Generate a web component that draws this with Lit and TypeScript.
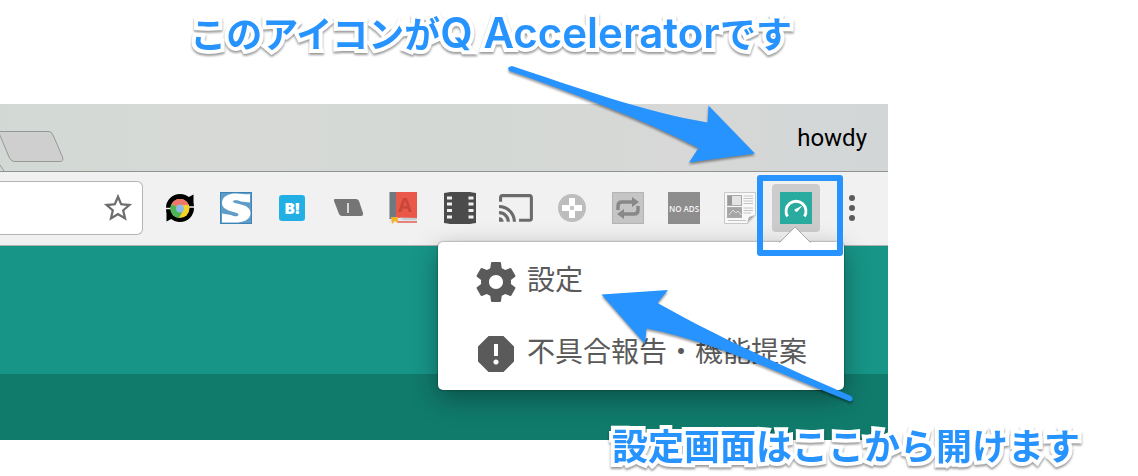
import { LitElement, html, css, svg } from "lit";
import { customElement } from "lit/decorators.js";

const extensions = [
  {
    name: "Reload",
    art: svg`<circle cx="16" cy="16" r="11.5" fill="none" stroke="#000" stroke-width="5"/>
      <path d="M21 7L29.500 2.500V15H20Z" fill="#000"/><path d="M11 25L2.500 29.500V17.500H12Z" fill="#000"/>
      <path d="M1 16.500H7M25 15H31" stroke="#f1f1f1" stroke-width="1.400"/>
      <circle cx="16" cy="16.500" r="9.500" fill="#f7d327"/>
      <path d="M16 16.500L7.500 12A9.500 9.500 0 0 1 24.800 13H16Z" fill="#f0756a"/>
      <path d="M16 16.500L7.500 12A9.500 9.500 0 0 0 15 26L19 18.500Z" fill="#4eb457"/>
      <circle cx="16" cy="16.500" r="4" fill="#8dbbe6"/>`,
  },
  {
    name: "Stylish",
    art: svg`<rect width="32" height="32" fill="#3d84b6"/><rect x="1" y="1" width="30" height="30" fill="#5f9dc8"/>
      <path d="M30 2V10.500L21 9.500C17 7.500 13 8 13 9.500C13 12.500 30.500 11 30.500 21C30.500 28 23 30.500 15 30.500H2V21.500L11 23C15 25 18.500 24.500 18.500 22.500C18.500 19.500 2 20 2 11C2 4 9 1.500 16 1.500C22 1.500 27 3 30 2Z" fill="#fff"/>`,
  },
  {
    name: "Bookmark",
    art: svg`<rect x="3" y="3" width="26" height="26" rx="3" fill="#22b0e4"/>
      <text x="16" y="22" font-size="16" font-weight="800" text-anchor="middle" fill="#fff">B!</text>`,
  },
  {
    name: "Tab",
    art: svg`<path d="M3 7H24Q26 7 27 9L31 21Q31.500 24 29 24H10Q8 24 7 22L2 9Q1.500 7 3 7Z" fill="#757575"/>
      <path d="M16 11V21" stroke="#d8d8d8" stroke-width="2"/>`,
  },
  {
    name: "Dictionary",
    art: svg`<rect x="1" width="28" height="31" fill="#e9eaf2"/><rect x="1.500" width="8" height="27" fill="#6f7a80"/>
      <rect x="8" width="21" height="26" fill="#e95848"/><path d="M9 28.500H29" stroke="#dde6ea" stroke-width="3"/>
      <path d="M9 30H29" stroke="#e95848" stroke-width="1.400"/><path d="M11 25.500L16 28H29V26Z" fill="#c3cdd2"/>
      <path d="M3 25H10V31L7 29L4 32Z" fill="#f0b52c"/>
      <text x="17" y="20" font-size="20" font-weight="700" text-anchor="middle" fill="#c9463a">A</text>`,
  },
  {
    name: "Film",
    art: svg`<path d="M0 1Q4 .5 6 0H26Q28 .5 32 1V31Q28 31.500 26 32H6Q4 31.500 0 31Z" fill="#4b4b4b"/>
      <path d="M3 4.500h5v3H3zM3 10.500h5v3H3zM3 17h5v3H3zM3 23.500h5v3H3zM24.500 4.500h5v3h-5zM24.500 10.500h5v3h-5zM24.500 17h5v3h-5zM24.500 23.500h5v3h-5z" fill="#f1f1f1"/>`,
  },
  {
    name: "Cast",
    art: svg`<path transform="translate(-2.500 -2.500) scale(1.54)" fill="#6b6b6b" d="M21 3H3c-1.100 0-2 .9-2 2v3h2V5h18v14h-7v2h7c1.100 0 2-.9 2-2V5c0-1.100-.9-2-2-2zM1 18v3h3c0-1.660-1.340-3-3-3zm0-4v2c2.760 0 5 2.240 5 5h2c0-3.870-3.130-7-7-7zm0-4v2c4.970 0 9 4.030 9 9h2c0-6.080-4.930-11-11-11z"/>`,
  },
  {
    name: "Game pad",
    art: svg`<circle cx="16" cy="16" r="14" fill="#bdbdbd"/>
      <path d="M13 6h6v7h7v6h-7v7h-6v-7H6v-6h7z" fill="#fff"/><rect x="14" y="14" width="4" height="4" rx="1" fill="#c4c4c4"/>`,
  },
  {
    name: "Repeat",
    art: svg`<rect x=".5" y=".5" width="31" height="31" fill="#c5c5c5" stroke="#b4b4b4"/>
      <path d="M6 18V14Q6 10 10 10H21M26 14V18Q26 22 22 22H11" fill="none" stroke="#888" stroke-width="3.500"/>
      <path d="M20 5L27 10L20 15Z M12 17L5 22L12 27Z" fill="#888"/>`,
  },
  {
    name: "No ads",
    art: svg`<rect width="32" height="32" fill="#8d8d8d"/>
      <text x="16" y="20" font-size="8" font-weight="600" text-anchor="middle" fill="#f4f4f4">NO ADS</text>`,
  },
  {
    name: "News",
    art: svg`<path d="M.5 .5H31.500V23L24 31.500H.5Z" fill="#f8f8f8" stroke="#c9c9c9"/>
      <rect x="3.500" y="3.500" width="14" height="10" fill="#e4e4e4" stroke="#aaa"/><rect x="4" y="4" width="4" height="9" fill="#999"/>
      <rect x="3.500" y="15.500" width="14" height="10" fill="#a5a5a5" stroke="#aaa"/><path d="M5 23L9 18L12 21L14 19L17 23" stroke="#ddd" fill="none"/>
      <path d="M19.500 4H29M19.500 6.500H29M19.500 9H29M19.500 11.500H29M19.500 16H29M19.500 18.500H29M19.500 21H27M4 28.500H22" stroke="#c4c4c4"/>
      <path d="M23 31L25 25L31 23Z" fill="#aaa"/>`,
  },
];

const menuItems = [
  {
    label: "設定",
    path: "M19.430 12.980c.04-.32.07-.64.07-.98s-.03-.66-.07-.98l2.110-1.650c.19-.15.24-.42.12-.64l-2-3.460c-.12-.22-.39-.3-.61-.22l-2.490 1c-.52-.4-1.080-.73-1.690-.98l-.38-2.650C14.460 2.180 14.250 2 14 2h-4c-.25 0-.46.18-.49.42l-.38 2.650c-.61.25-1.170.59-1.690.98l-2.490-1c-.23-.09-.49 0-.61.22l-2 3.460c-.13.22-.07.49.12.64l2.110 1.650c-.04.32-.07.65-.07.98s.03.66.07.98l-2.110 1.650c-.19.15-.24.42-.12.64l2 3.460c.12.22.39.3.61.22l2.490-1c.52.4 1.080.73 1.690.98l.38 2.650c.03.24.24.42.49.42h4c.25 0 .46-.18.49-.42l.38-2.650c.61-.25 1.170-.59 1.690-.98l2.490 1c.23.09.49 0 .61-.22l2-3.460c.12-.22.07-.49-.12-.64l-2.110-1.650zM12 15.500c-1.930 0-3.500-1.570-3.500-3.500s1.570-3.500 3.500-3.500 3.500 1.570 3.500 3.500-1.570 3.500-3.500 3.500z",
  },
  {
    label: "不具合報告・機能提案",
    path: "M15.730 3H8.270L3 8.270v7.460L8.270 21h7.460L21 15.730V8.270L15.730 3zM12 17.300c-.72 0-1.300-.58-1.300-1.300s.58-1.300 1.300-1.300 1.300.58 1.300 1.300-.58 1.300-1.300 1.300zm1-4.300h-2V7h2v6z",
  },
];

@customElement("browser-toolbar")
class BrowserToolbar extends LitElement {
  static styles = css`
    :host {
      display: flex;
      align-items: center;
      box-sizing: border-box;
      height: 75px;
      padding: 0 8px 2px 0;
      background: #f1f1f1;
      border-top: 1px solid #8f9391;
      border-bottom: 1px solid #b0b0b0;
    }
    .address {
      flex: 1;
      min-width: 0;
      display: flex;
      align-items: center;
      justify-content: flex-end;
      box-sizing: border-box;
      height: 54px;
      margin-right: 9px;
      padding-right: 7px;
      background: #fff;
      border: 1px solid #b4b4b4;
      border-left: 0;
      border-radius: 0 6px 6px 0;
    }
    .url {
      flex: 1;
      min-width: 0;
      height: 32px;
      padding: 0;
      border: 0;
      background: none;
      outline: 0;
      font: 24px Roboto, sans-serif;
    }
    button {
      display: grid;
      place-items: center;
      flex: none;
      padding: 0;
      border: 0;
      background: none;
    }
    .extension {
      width: 56px;
      height: 48px;
    }
    .active {
      width: 48px;
      margin: 0 4px;
      background: #ccc;
      border-radius: 4px;
    }
    svg {
      display: block;
      overflow: visible;
      font-family: "Open Sans", sans-serif;
    }
  `;
  render() {
    return html`
      <div class="address">
        <input class="url" type="text" aria-label="Address" />
        <button aria-label="Bookmark this page">
          <svg width="34" height="34" viewBox="0 0 24 24" fill="#6e6e6e"><path d="M22 9.240l-7.190-.62L12 2 9.190 8.630 2 9.240l5.460 4.730L5.820 21 12 17.270 18.180 21l-1.630-7.030L22 9.240zM12 15.400l-3.760 2.270 1-4.280-3.320-2.880 4.380-.38L12 6.100l1.710 4.040 4.380.38-3.320 2.880 1 4.280L12 15.400z"/></svg>
        </button>
      </div>
      ${extensions.map(
        (e) => html`<button class="extension" aria-label=${e.name}>
          <svg width="32" height="32" viewBox="0 0 32 32">${e.art}</svg>
        </button>`
      )}
      <button class="extension active" aria-label="Q Accelerator">
        <svg width="32" height="32" viewBox="0 0 32 32">
          <rect width="32" height="32" fill="#2aaba0" />
          <path d="M7.500 24.500A10 10 0 1 1 24.500 24.500" fill="none" stroke="#fff" stroke-width="2.800" />
          <path d="M22.500 13.500L17.500 19.500A2 2 0 0 1 14.500 17.500Z" fill="#fff" />
        </svg>
      </button>
      <button class="extension" aria-label="Browser menu">
        <svg width="32" height="32" viewBox="0 0 32 32" fill="#5c5c5c">
          <circle cx="16" cy="6" r="3" /><circle cx="16" cy="16" r="3" /><circle cx="16" cy="26" r="3" />
        </svg>
      </button>
    `;
  }
}

@customElement("extension-popup")
class ExtensionPopup extends LitElement {
  static styles = css`
    :host {
      display: block;
      box-sizing: border-box;
      padding-top: 4px;
      background: #fff;
      border-radius: 5px;
      box-shadow: 0 0 2px rgba(0, 0, 0, 0.55), 0 8px 26px rgba(0, 0, 0, 0.34);
    }
    .pointer {
      position: absolute;
      right: 33px;
      top: -16px;
      display: block;
    }
    .item {
      display: flex;
      align-items: center;
      gap: 7px;
      width: 100%;
      height: 72px;
      padding: 0 34px;
      border: 0;
      background: none;
      color: #5a5a5a;
      font: 28px/40px "Noto Sans CJK JP", sans-serif;
      white-space: nowrap;
    }
    .icon {
      flex: none;
    }
    .label {
      padding-bottom: 8px;
    }
  `;
  render() {
    return html`
      <svg class="pointer" width="32" height="18" viewBox="0 0 32 18">
        <path d="M0 16.500H1L16 1L31 16.500H32V18H0Z" fill="#fff" />
        <path d="M0 16H1L16 1L31 16H32" fill="none" stroke="#aaa" />
      </svg>
      ${menuItems.map(
        (m) => html`<button class="item">
          <svg class="icon" width="48" height="48" viewBox="0 0 24 24" fill="#5a5a5a"><path d=${m.path} /></svg>
          <span class="label">${m.label}</span>
        </button>`
      )}
    `;
  }
}

@customElement("app-root")
class AppRoot extends LitElement {
  static styles = css`
    :host {
      display: block;
      background: #fff;
    }
    .caption {
      margin: 0;
      text-align: right;
      color: #2693ff;
      font: 700 36px/48px "Noto Sans CJK JP", sans-serif;
      -webkit-text-stroke: 8px #fff;
      paint-order: stroke fill;
      stroke-linejoin: round;
      filter: drop-shadow(0 2px 1px rgba(0, 0, 0, 0.4));
      white-space: nowrap;
    }
    .top {
      box-sizing: border-box;
      height: 104px;
      padding: 8px 346px 0 0;
    }
    .bottom {
      position: relative;
      margin-top: -20px;
      padding: 0 58px 8px 0;
    }
    .latin {
      font-family: Inter, sans-serif;
      font-size: 42px;
      font-weight: 600;
      line-height: 40px;
    }
    .window {
      position: relative;
      margin-right: 250px;
    }
    .titlebar {
      display: flex;
      justify-content: space-between;
      align-items: center;
      height: 67px;
      padding-right: 21px;
      background: linear-gradient(90deg, #d2d9d4, #d7d9d6 24%, #d3d8d4 50%, #d7d8d7 76%, #d2d6d7);
      font: 24px/28px Roboto, sans-serif;
      color: #000;
    }
    .tab {
      display: block;
    }
    .band {
      height: 128px;
      background: #179587;
    }
    .body {
      height: 66px;
      background: #107a6b;
    }
    .popup {
      position: absolute;
      top: 138px;
      right: 44px;
      width: 406px;
    }
    .highlight {
      position: absolute;
      top: 71px;
      right: 45px;
      box-sizing: border-box;
      width: 86px;
      height: 81px;
      border: 6px solid #2693ff;
      border-radius: 3px;
    }
    .arrow {
      position: absolute;
      overflow: visible;
      fill: #2693ff;
      filter: drop-shadow(0 2px 1px rgba(0, 0, 0, 0.4));
      pointer-events: none;
    }
    .to-icon {
      top: -44px;
      right: 128px;
    }
    .to-menu {
      top: 176px;
      right: 28px;
    }
  `;
  render() {
    return html`
      <p class="caption top">このアイコンが<span class="latin">Q Accelerator</span>です</p>
      <section class="window">
        <header class="titlebar">
          <svg class="tab" width="66" height="67" viewBox="0 0 66 67" fill="none" stroke="#959997">
            <path d="M-3 27.500H49Q51.500 27.500 53 31L62.500 53Q64 57.500 60 57.500H14Q11 57.500 9 53L-1 29" fill="#cfcfcf" />
            <path d="M-2 58L4 67" />
          </svg>
          <span>howdy</span>
        </header>
        <browser-toolbar></browser-toolbar>
        <div class="band"></div>
        <div class="body"></div>
        <extension-popup class="popup"></extension-popup>
        <div class="highlight"></div>
        <svg class="arrow to-icon" width="260" height="110" viewBox="500 60 260 110">
          <path d="M512 66C575 87 645 112 707.500 122.500L708.500 105.500L755 153.500L689 162.500L698.500 148C640 118 570 92 509.500 71Q506 67 512 66Z" />
        </svg>
        <svg class="arrow to-menu" width="260" height="125" viewBox="600 280 260 125">
          <path d="M601.500 294.500L668 290L657.500 303C720 338 780 365 851 396Q855 400 850 401.500C780 374 715 342 646.500 328.500L645 344Z" />
        </svg>
      </section>
      <p class="caption bottom">設定画面はここから開けます</p>
    `;
  }
}
